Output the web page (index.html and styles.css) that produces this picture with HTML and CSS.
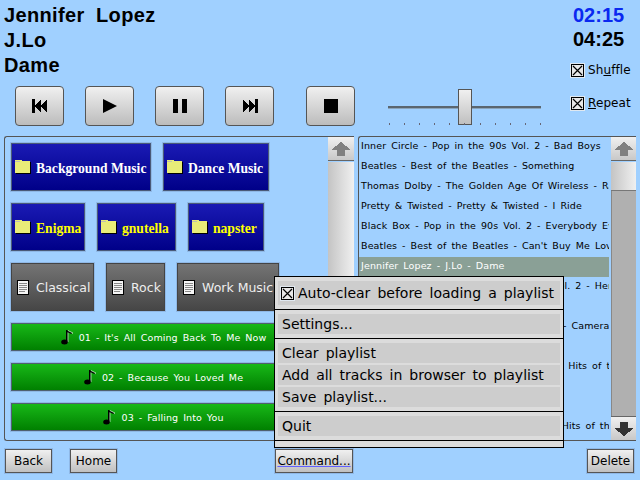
FILE: index.html
```html
<!DOCTYPE html>
<html lang="en">
<head>
<meta charset="utf-8">
<title>Player</title>
<link rel="stylesheet" href="styles.css">
</head>
<body>
<div class="app">
  <header class="top">
    <div class="top-left">
      <div class="titles">
        <div>Jennifer Lopez</div>
        <div>J.Lo</div>
        <div>Dame</div>
      </div>
      <div class="controls">
        <button class="ctl"><svg width="16" height="14" viewBox="0 0 16 14" shape-rendering="crispEdges"><path d="M0 0h3v14H0zM3 7l6-7v14zM9 7l6-7v14z"/></svg></button>
        <button class="ctl"><svg width="14" height="14" viewBox="0 0 14 14"><path d="M0 0l14 7L0 14z"/></svg></button>
        <button class="ctl"><svg width="14" height="14" viewBox="0 0 14 14" shape-rendering="crispEdges"><path d="M0 0h5v14H0zM9 0h5v14H9z"/></svg></button>
        <button class="ctl"><svg width="16" height="14" viewBox="0 0 16 14" shape-rendering="crispEdges"><path d="M1 0l6 7-6 7zM7 0l6 7-6 7zM13 0h3v14h-3z"/></svg></button>
        <button class="ctl stop"><svg width="14" height="14" viewBox="0 0 14 14" shape-rendering="crispEdges"><path d="M0 0h14v14H0z"/></svg></button>
        <div class="slider">
          <div class="track"></div>
          <div class="handle"></div>
          <div class="ticks"><i></i><i></i><i></i><i></i><i></i><i></i><i></i><i></i><i></i><i></i><i></i></div>
        </div>
      </div>
    </div>
    <div class="top-right">
      <div class="time now">02:15</div>
      <div class="time">04:25</div>
      <label class="check shuffle"><span class="box"><svg width="11" height="11" viewBox="0 0 11 11"><path d="M1 1l9 9M10 1l-9 9" stroke="#000" stroke-width="1.2"/></svg></span><span>Sh<u>u</u>ffle</span></label>
      <label class="check repeat"><span class="box"><svg width="11" height="11" viewBox="0 0 11 11"><path d="M1 1l9 9M10 1l-9 9" stroke="#000" stroke-width="1.2"/></svg></span><span><u>R</u>epeat</span></label>
    </div>
  </header>

  <main class="panes">
    <section class="pane browser">
      <div class="browse-list">
        <div class="row">
          <button class="tile folder w140"><svg class="ico" width="17" height="14" viewBox="0 0 17 14" shape-rendering="crispEdges"><path d="M1 2h15v12H1z" fill="#000"/><path d="M0 3V0h6l1 1h8v12H0z" fill="#e8ec78"/><path d="M0 2h5V1H0z" fill="#c0c0b0"/></svg>Background Music</button>
          <button class="tile folder w106"><svg class="ico" width="17" height="14" viewBox="0 0 17 14" shape-rendering="crispEdges"><path d="M1 2h15v12H1z" fill="#000"/><path d="M0 3V0h6l1 1h8v12H0z" fill="#e8ec78"/><path d="M0 2h5V1H0z" fill="#c0c0b0"/></svg>Dance Music</button>
        </div>
        <div class="row">
          <button class="tile folder yellow w74"><svg class="ico" width="17" height="14" viewBox="0 0 17 14" shape-rendering="crispEdges"><path d="M1 2h15v12H1z" fill="#000"/><path d="M0 3V0h6l1 1h8v12H0z" fill="#e8ec78"/><path d="M0 2h5V1H0z" fill="#c0c0b0"/></svg>Enigma</button>
          <button class="tile folder yellow w79"><svg class="ico" width="17" height="14" viewBox="0 0 17 14" shape-rendering="crispEdges"><path d="M1 2h15v12H1z" fill="#000"/><path d="M0 3V0h6l1 1h8v12H0z" fill="#e8ec78"/><path d="M0 2h5V1H0z" fill="#c0c0b0"/></svg>gnutella</button>
          <button class="tile folder yellow w76"><svg class="ico" width="17" height="14" viewBox="0 0 17 14" shape-rendering="crispEdges"><path d="M1 2h15v12H1z" fill="#000"/><path d="M0 3V0h6l1 1h8v12H0z" fill="#e8ec78"/><path d="M0 2h5V1H0z" fill="#c0c0b0"/></svg>napster</button>
        </div>
        <div class="row">
          <button class="tile plist w83"><svg class="ico" width="12" height="15" viewBox="0 0 12 15" shape-rendering="crispEdges"><path d="M0 0h12v15H0z"/><path d="M1 1h10v13H1z" fill="#f4f4f4"/><path d="M2 3h8v1H2zM2 5h8v1H2zM2 7h8v1H2zM2 9h8v1H2zM2 11h6v1H2z" fill="#888"/></svg>Classical</button>
          <button class="tile plist w59"><svg class="ico" width="12" height="15" viewBox="0 0 12 15" shape-rendering="crispEdges"><path d="M0 0h12v15H0z"/><path d="M1 1h10v13H1z" fill="#f4f4f4"/><path d="M2 3h8v1H2zM2 5h8v1H2zM2 7h8v1H2zM2 9h8v1H2zM2 11h6v1H2z" fill="#888"/></svg>Rock</button>
          <button class="tile plist w102"><svg class="ico" width="12" height="15" viewBox="0 0 12 15" shape-rendering="crispEdges"><path d="M0 0h12v15H0z"/><path d="M1 1h10v13H1z" fill="#f4f4f4"/><path d="M2 3h8v1H2zM2 5h8v1H2zM2 7h8v1H2zM2 9h8v1H2zM2 11h6v1H2z" fill="#888"/></svg>Work Music</button>
        </div>
        <button class="song"><svg class="ico" width="12" height="15" viewBox="0 0 12 15"><path d="M5 1h1.500v11h-1.500zM6 0l6 3-1 1-5-2z" fill="#fff" transform="translate(1 0)" opacity=".6"/><path d="M5 0h1.500v11.500h-1.500zM5 0l6 3-.6 1L6 2z"/><ellipse cx="3.500" cy="12" rx="3.300" ry="2.500"/></svg>01 - It's All Coming Back To Me Now</button>
        <button class="song"><svg class="ico" width="12" height="15" viewBox="0 0 12 15"><path d="M5 1h1.500v11h-1.500zM6 0l6 3-1 1-5-2z" fill="#fff" transform="translate(1 0)" opacity=".6"/><path d="M5 0h1.500v11.500h-1.500zM5 0l6 3-.6 1L6 2z"/><ellipse cx="3.500" cy="12" rx="3.300" ry="2.500"/></svg>02 - Because You Loved Me</button>
        <button class="song"><svg class="ico" width="12" height="15" viewBox="0 0 12 15"><path d="M5 1h1.500v11h-1.500zM6 0l6 3-1 1-5-2z" fill="#fff" transform="translate(1 0)" opacity=".6"/><path d="M5 0h1.500v11.500h-1.500zM5 0l6 3-.6 1L6 2z"/><ellipse cx="3.500" cy="12" rx="3.300" ry="2.500"/></svg>03 - Falling Into You</button>
      </div>
      <div class="scroll wide">
        <div class="arrow"><svg width="20" height="14" viewBox="0 0 20 14" shape-rendering="crispEdges"><path d="M10 0l10 8h-6v6H6V8H0z" fill="#808080"/></svg></div>
        <div class="thumb full"></div>
      </div>
    </section>

    <section class="pane playlist">
      <ul class="tracks">
        <li>Inner Circle - Pop in the 90s Vol. 2 - Bad Boys</li>
        <li>Beatles - Best of the Beatles - Something</li>
        <li>Thomas Dolby - The Golden Age Of Wireless - Radio</li>
        <li>Pretty &amp; Twisted - Pretty &amp; Twisted - I Ride</li>
        <li>Black Box - Pop in the 90s Vol. 2 - Everybody Everybody</li>
        <li>Beatles - Best of the Beatles - Can't Buy Me Love</li>
        <li class="on">Jennifer Lopez - J.Lo - Dame</li>
        <li>C+C Music Factory! - Pop in the 90s Vol. 2 - Here</li>
        <li>Beatles</li>
        <li>T. Dolby - The Golden Age Of Wireless - Camera</li>
        <li>Beatles</li>
        <li>Roxette - Don't Bore Us Now - Greatest Hits of the 80s</li>
        <li>Beatles</li>
        <li>Beatles</li>
        <li>Eurythmics - Sweet Dreams - Greatest Hits of the 80s</li>
      </ul>
      <div class="scroll">
        <div class="arrow"><svg width="20" height="14" viewBox="0 0 20 14" shape-rendering="crispEdges"><path d="M10 0l10 8h-6v6H6V8H0z" fill="#808080"/></svg></div>
        <div class="thumb"></div>
        <div class="trough"></div>
        <div class="arrow"><svg width="20" height="14" viewBox="0 0 20 14" shape-rendering="crispEdges"><path d="M10 14L0 6h6V0h8v6h6z" fill="#333"/></svg></div>
      </div>
    </section>
  </main>

  <footer class="bottom">
    <button class="btn back">Back</button>
    <button class="btn home">Home</button>
    <button class="btn command"><u>Command...</u></button>
    <button class="btn delete">Delete</button>
  </footer>

  <nav class="menu">
    <div class="sect"><div class="item tall"><span class="box"><svg width="11" height="11" viewBox="0 0 11 11"><path d="M1 1l9 9M10 1l-9 9" stroke="#000" stroke-width="1.2"/></svg></span><span>Auto-clear before loading a playlist</span></div></div>
    <div class="sect"><div class="item">Settings...</div></div>
    <div class="sect"><div class="item">Clear playlist</div><div class="item">Add all tracks in browser to playlist</div><div class="item">Save playlist...</div></div>
    <div class="sect"><div class="item">Quit</div></div>
    <div class="sect tail"></div>
  </nav>
</div>
</body>
</html>
```
FILE: styles.css
```css
* { box-sizing: border-box; }
html, body { margin: 0; padding: 0; }
body { background: #a0d0ff; }
button { margin: 0; padding: 0; font: inherit; color: inherit; cursor: default; }
.app {
  position: relative;
  width: 640px;
  height: 480px;
  overflow: hidden;
  background: #a0d0ff;
  color: #000;
  font-family: "DejaVu Sans", sans-serif;
}

/* top */
.top { display: flex; height: 136px; }
.top-left { width: 571px; padding-top: 3px; }
.titles {
  padding-left: 4px;
  font: bold 20px/25px "Liberation Sans", sans-serif;
  letter-spacing: .35px;
  word-spacing: 5.500px;
  height: 83px;
}
.controls { display: flex; align-items: flex-start; gap: 21px; padding-left: 15px; }
.ctl {
  display: flex;
  align-items: center;
  justify-content: center;
  width: 49px;
  height: 40px;
  border: 1px solid #555;
  border-radius: 4px;
  background: linear-gradient(#f0f0f0, #bcbcbc);
}
.stop { margin-left: 11px; }
.slider { position: relative; width: 153px; height: 40px; margin-left: 12px; }
.track {
  position: absolute; left: 0; right: 0; top: 20px; height: 3px;
  background: #5a6670; border-bottom: 1px solid #8aa4bc;
}
.handle {
  position: absolute; left: 70px; top: 3px; width: 14px; height: 36px;
  border: 1px solid #555;
  background: linear-gradient(#f0f0f0, #c0c0c0);
}
.ticks { position: absolute; left: 1px; right: 0; top: 37px; display: flex; justify-content: space-between; }
.ticks i { width: 1px; height: 2px; background: #667; }

.top-right { flex: 1; padding-top: 3px; position: relative; }
.time { font: bold 20px/24px "Liberation Sans", sans-serif; padding-left: 2px; }
.now { color: #0a28f0; }
.check {
  display: flex; align-items: center; gap: 4px;
  font-size: 12px; line-height: 14px; white-space: nowrap; letter-spacing: .1px;
}
.shuffle { margin-top: 12px; }
.repeat { margin-top: 19px; }
.box {
  display: inline-flex; align-items: center; justify-content: center;
  width: 13px; height: 13px; flex: none;
  background: #e8e8e8; border: 1px solid #000; outline: 1px solid #e0e8f0;
}

/* panes */
.panes { display: flex; gap: 4px; height: 305px; padding: 0 4px; }
.pane {
  display: flex;
  border: 1px solid #555;
  border-right: 0;
  border-radius: 3px 0 0 3px;
  overflow: hidden;
}
.browser { width: 350px; }
.playlist { width: 278px; }
.browse-list {
  flex: 1; min-width: 0;
  display: flex; flex-direction: column; gap: 12px;
  padding: 6px 0 0 6px;
}
.row { display: flex; gap: 12px; flex: none; }
.tile {
  display: flex; align-items: center; flex: none; gap: 4px;
  height: 48px; padding: 0 0 0 3px;
  white-space: nowrap;
  border: 1px solid #4a5a78;
  outline: 1px solid #8fb8e6;
}
.folder {
  background: linear-gradient(#1a1ab4, #000088);
  color: #fff;
  font: bold 13.600px/1 "Liberation Serif", serif;
  padding-top: 3px;
}
.folder .ico { margin-top: -3px; }
.yellow { color: #ffff00; }
.plist {
  background: linear-gradient(#747474, #464646);
  color: #eee;
  font-size: 12.500px;
  padding-left: 5px;
  gap: 7px;
  border-color: #444;
}
.w140 { width: 140px; }
.w106 { width: 106px; }
.w74 { width: 74px; }
.w79 { width: 79px; }
.w76 { width: 76px; }
.w83 { width: 83px; }
.w59 { width: 59px; }
.w102 { width: 102px; }
.ico { flex: none; }
.song {
  display: flex; align-items: center; justify-content: center; gap: 6px;
  flex: none; width: 309px; height: 28px;
  padding-right: 4px;
  background: linear-gradient(#18b818, #008000);
  color: #fff;
  font-size: 9.500px;
  letter-spacing: .1px;
  word-spacing: 1.800px;
  border: 1px solid #4f6070;
  outline: 1px solid #8fb8e6;
  white-space: nowrap;
}

.scroll { display: flex; flex-direction: column; flex: none; width: 25px; }
.scroll.wide { width: 26px; }
.arrow {
  flex: none; display: flex; align-items: center; justify-content: center;
  height: 24px;
  background: linear-gradient(#f0f0f0, #c8c8c8);
  border-bottom: 1px solid #666;
}
.arrow:last-child { border-bottom: 0; border-top: 1px solid #666; }
.thumb {
  height: 29px; flex: none; margin-top: 1px;
  background: linear-gradient(90deg, #c4c4c4, #f0f0f0);
  border-bottom: 1px solid #777;
}
.thumb.full { flex: 1; border: 0; }
.trough { flex: 1; background: #b0b0b0; border-left: 1px solid #888; }

.tracks {
  flex: 1; min-width: 0;
  list-style: none; margin: 0; padding: 0 2px 0 0;
  overflow: hidden;
  font-size: 9.500px;
  letter-spacing: .12px;
  word-spacing: 1.800px;
}
.tracks li { height: 20px; line-height: 17px; white-space: nowrap; overflow: hidden; padding-left: 2px; }
.tracks .on { background: #8aa096; color: #fff; }

/* bottom */
.bottom { display: flex; padding-top: 8px; }
.btn {
  height: 24px;
  border: 1px solid #555;
  outline: 1px solid #8fb8e6;
  background: linear-gradient(#f0f0f0, #c0c0c0);
  font-size: 12px;
}
.back { width: 47px; margin-left: 5px; }
.home { width: 47px; margin-left: 18px; }
.command { width: 78px; margin-left: 158px; }
.command u { text-decoration-color: #6060ff; }
.delete { width: 47px; margin-left: 234px; }

/* popup */
.menu {
  position: absolute; left: 274px; top: 276px;
  width: 290px; height: 172px;
  display: flex; flex-direction: column;
  background: #000;
  border: 1px solid #000;
  gap: 1px;
  font-size: 14px;
  word-spacing: 2.600px;
}
.sect {
  background: #dcdcdc;
  padding: 4px 3px;
  display: flex; flex-direction: column; gap: 2px;
}
.tail { height: 6px; padding: 0; }
.item {
  display: flex; align-items: center; gap: 4px;
  height: 20px;
  padding-left: 4px;
  background: #cdcdcd;
  white-space: nowrap;
}
.tall { height: 24px; padding-left: 3px; }
```
